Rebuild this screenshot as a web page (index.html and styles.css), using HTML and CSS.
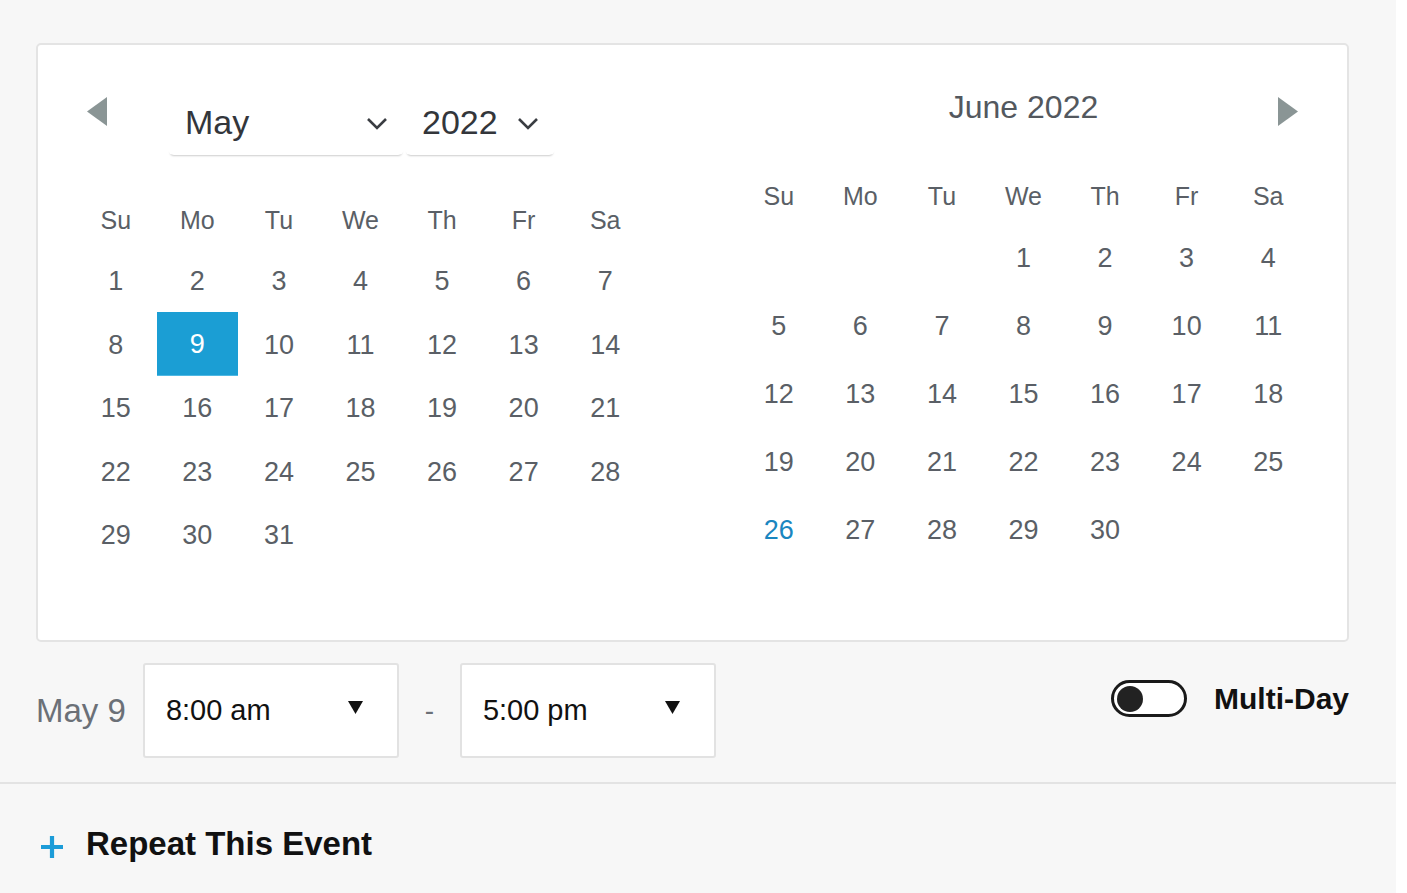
FILE: index.html
```html
<!DOCTYPE html>
<html lang="en">
<head>
	<meta charset="UTF-8">
	<title>Event date picker</title>
	<link rel="stylesheet" href="styles.css">
</head>
<body>
	<div class="page">
		<div class="top">
			<div class="card">
				<!-- left month -->
				<div class="month">
					<div class="head-left">
						<svg class="arrow" width="20" height="29" viewBox="0 0 20 29"><polygon points="20,0 20,29 0,14.5" fill="#8a9595"/></svg>
						<div class="select select-month">
							<span>May</span>
							<svg width="22" height="13" viewBox="0 0 22 13"><polyline points="2,2 11,11 20,2" fill="none" stroke="#3a3d42" stroke-width="2.6"/></svg>
						</div>
						<div class="select select-year">
							<span>2022</span>
							<svg width="22" height="13" viewBox="0 0 22 13"><polyline points="2,2 11,11 20,2" fill="none" stroke="#3a3d42" stroke-width="2.6"/></svg>
						</div>
					</div>
					<div class="grid weekdays weekdays-left">
						<span>Su</span><span>Mo</span><span>Tu</span><span>We</span><span>Th</span><span>Fr</span><span>Sa</span>
					</div>
					<div class="grid days days-left">
						<span>1</span><span>2</span><span>3</span><span>4</span><span>5</span><span>6</span><span>7</span>
						<span>8</span><span class="selected">9</span><span>10</span><span>11</span><span>12</span><span>13</span><span>14</span>
						<span>15</span><span>16</span><span>17</span><span>18</span><span>19</span><span>20</span><span>21</span>
						<span>22</span><span>23</span><span>24</span><span>25</span><span>26</span><span>27</span><span>28</span>
						<span>29</span><span>30</span><span>31</span>
					</div>
				</div>

				<!-- right month -->
				<div class="month">
					<div class="head-right">
						<span></span>
						<div class="title">June 2022</div>
						<svg class="arrow arrow-next" width="20" height="29" viewBox="0 0 20 29"><polygon points="0,0 0,29 20,14.5" fill="#8a9595"/></svg>
					</div>
					<div class="grid weekdays weekdays-right">
						<span>Su</span><span>Mo</span><span>Tu</span><span>We</span><span>Th</span><span>Fr</span><span>Sa</span>
					</div>
					<div class="grid days days-right">
						<span></span><span></span><span></span><span>1</span><span>2</span><span>3</span><span>4</span>
						<span>5</span><span>6</span><span>7</span><span>8</span><span>9</span><span>10</span><span>11</span>
						<span>12</span><span>13</span><span>14</span><span>15</span><span>16</span><span>17</span><span>18</span>
						<span>19</span><span>20</span><span>21</span><span>22</span><span>23</span><span>24</span><span>25</span>
						<span class="today">26</span><span>27</span><span>28</span><span>29</span><span>30</span>
					</div>
				</div>
			</div>

			<div class="times">
				<div class="date-label">May 9</div>
				<div class="time-box">
					<span>8:00 am</span>
					<svg width="15" height="13" viewBox="0 0 15 13"><polygon points="0,0 15,0 7.5,13" fill="#111"/></svg>
				</div>
				<div class="dash">-</div>
				<div class="time-box">
					<span>5:00 pm</span>
					<svg width="15" height="13" viewBox="0 0 15 13"><polygon points="0,0 15,0 7.5,13" fill="#111"/></svg>
				</div>
				<div class="multi">
					<div class="toggle"><div class="knob"></div></div>
					<span>Multi-Day</span>
				</div>
			</div>
		</div>

		<div class="repeat">
			<svg width="24" height="24" viewBox="0 0 24 24"><path d="M12 1 V23 M1 12 H23" stroke="#1c9cd8" stroke-width="4.2"/></svg>
			<span>Repeat This Event</span>
		</div>
	</div>
</body>
</html>
```

FILE: styles.css
```css
*{
	margin:0;
	padding:0;
	box-sizing:border-box;
}
body{
	background:#fff;
	font-family:"Liberation Sans", Arial, Helvetica, sans-serif;
}
.page{
	width:1396px;
	height:893px;
	background:#f7f7f7;
}
.top{
	padding:43px 47px 0 36px;
}

/* calendar card */
.card{
	height:599px;
	background:#fff;
	border:2px solid #e4e4e4;
	border-radius:5px;
	display:flex;
	gap:92px;
	padding:0 38px 0 37px;
}
.month{
	width:571px;
}
.head-left{
	height:145px;
	display:flex;
	align-items:flex-start;
	padding-left:12px;
}
.head-left .arrow{
	margin-top:52px;
}
.select{
	margin-top:45px;
	height:65px;
	display:flex;
	align-items:center;
	justify-content:space-between;
	padding:0 16px 0 17px;
	border-radius:6px;
	box-shadow:0 3px 2px -2px rgba(0,0,0,0.2);
	font-size:34px;
	color:#33363b;
}
.select-month{
	width:236px;
	margin-left:61px;
}
.select-year{
	width:150px;
	margin-left:1px;
}
.select svg{
	margin-top:2px;
}
.head-right{
	height:123px;
	display:grid;
	grid-template-columns:1fr auto 1fr;
	align-items:start;
}
.title{
	margin-top:42px;
	line-height:40px;
	font-size:32px;
	color:#53585e;
}
.arrow-next{
	justify-self:end;
	margin-top:52px;
	margin-right:11px;
}
.grid{
	display:grid;
	grid-template-columns:repeat(7, 1fr);
}
.grid span{
	display:flex;
	align-items:center;
	justify-content:center;
	color:#5a5f66;
}
.weekdays span{
	font-size:25px;
}
.weekdays-left span{
	height:60px;
}
.weekdays-right span{
	height:56px;
}
.days span{
	font-size:27px;
}
.days-left span{
	height:63.5px;
}
.days-right span{
	height:68px;
}
.days .selected{
	background:#1b9ed4;
	color:#fff;
	border-bottom:1px solid #4fb8e3;
	margin-top:-2px;
	height:64px;
	padding-top:2px;
}
.days .today{
	color:#1a86c0;
}

/* time row */
.times{
	margin-top:21px;
	height:95px;
	display:flex;
	align-items:center;
}
.date-label{
	font-size:33px;
	color:#6b7077;
	margin-right:17px;
}
.time-box{
	width:256px;
	height:95px;
	background:#fff;
	border:2px solid #e2e2e2;
	border-radius:3px;
	display:flex;
	align-items:center;
	justify-content:space-between;
	padding:0 34px 0 21px;
	font-size:29px;
	color:#111;
}
.time-box svg{
	margin-top:-6px;
}
.dash{
	width:61px;
	text-align:center;
	font-size:28px;
	color:#6b7077;
}
.multi{
	margin-left:auto;
	align-self:flex-start;
	margin-top:17px;
	display:flex;
	align-items:center;
	gap:27px;
	font-size:30px;
	font-weight:bold;
	color:#111;
}
.toggle{
	width:76px;
	height:37px;
	border:3px solid #1a1a1a;
	border-radius:19px;
	background:#fff;
	display:flex;
	align-items:center;
	padding-left:3px;
}
.knob{
	width:26px;
	height:26px;
	border-radius:50%;
	background:#222;
}

/* repeat */
.repeat{
	margin-top:24px;
	border-top:2px solid #e3e3e3;
	padding:41px 0 0 40px;
	display:flex;
	align-items:center;
	gap:22px;
	font-size:33px;
	font-weight:bold;
	color:#111;
}
.repeat svg{
	margin-top:5px;
}
```
